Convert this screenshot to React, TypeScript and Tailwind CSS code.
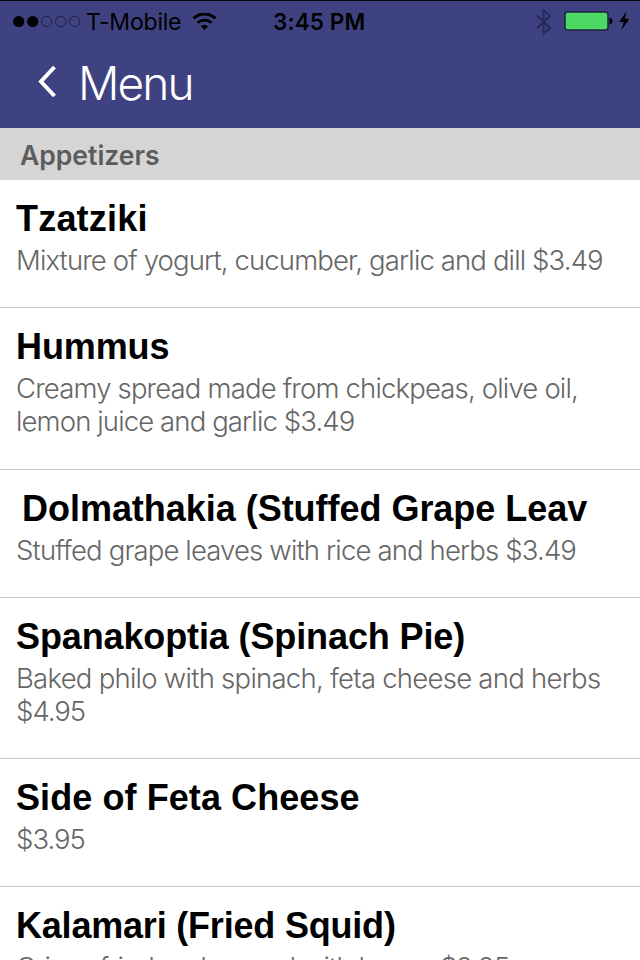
type Line = { text: string; tracking: string };
type Item = { name: string; nameClass: string; height: string; lines: Line[] };

const items: Item[] = [
  {
    name: "Tzatziki",
    nameClass: "tracking-[0.2px]",
    height: "h-[128px]",
    lines: [{ text: "Mixture of yogurt, cucumber, garlic and dill $3.49", tracking: "tracking-[-0.87px]" }],
  },
  {
    name: "Hummus",
    nameClass: "tracking-[-0.1px]",
    height: "h-[162px]",
    lines: [
      { text: "Creamy spread made from chickpeas, olive oil,", tracking: "tracking-[-0.83px]" },
      { text: "lemon juice and garlic $3.49", tracking: "tracking-[-0.88px]" },
    ],
  },
  {
    name: "Dolmathakia (Stuffed Grape Leav",
    nameClass: "pl-[6px] tracking-[-0.03px]",
    height: "h-[128px]",
    lines: [{ text: "Stuffed grape leaves with rice and herbs $3.49", tracking: "tracking-[-0.85px]" }],
  },
  {
    name: "Spanakoptia (Spinach Pie)",
    nameClass: "tracking-[-0.12px]",
    height: "h-[161px]",
    lines: [
      { text: "Baked philo with spinach, feta cheese and herbs", tracking: "tracking-[-0.74px]" },
      { text: "$4.95", tracking: "tracking-[-1px]" },
    ],
  },
  {
    name: "Side of Feta Cheese",
    nameClass: "tracking-[0.08px]",
    height: "h-[128px]",
    lines: [{ text: "$3.95", tracking: "tracking-[-1px]" }],
  },
  {
    name: "Kalamari (Fried Squid)",
    nameClass: "tracking-[-0.2px]",
    height: "h-[128px]",
    lines: [{ text: "Crispy fried and served with lemon $9.95", tracking: "tracking-[-0.88px]" }],
  },
];

function StatusBar() {
  return (
    <div className="flex h-[43px] items-center border-t border-[#0a0a12] text-black">
      <svg className="ml-[12px] shrink-0" width="70" height="14" viewBox="0 0 70 14">
        {[0, 1, 2, 3, 4].map((i) => (
          <circle
            key={i}
            cx={6.7 + i * 14}
            cy="6.5"
            r={i < 2 ? 5.6 : 5.2}
            fill={i < 2 ? "#000" : "none"}
            stroke={i < 2 ? "none" : "#1c1e45"}
            strokeWidth="1"
          />
        ))}
      </svg>
      <span className="ml-[4px] w-[96px] whitespace-nowrap font-['Inter','Liberation_Sans',sans-serif] text-[23px] leading-[28px] tracking-[-0.2px]">
        T-Mobile
      </span>
      <svg className="ml-[10px] shrink-0" width="25" height="19" viewBox="0 0 25 19" fill="none" stroke="#000">
        <path d="M1.500 5.400C7.800 -.6 17.200 -.6 23.500 5.400" strokeWidth="3" />
        <path d="M5.500 9.800C9.500 6.100 15.500 6.100 19.500 9.800" strokeWidth="2.800" />
        <path d="M8.800 13.200Q12.500 10.100 16.200 13.200L12.500 17Z" fill="#000" stroke="none" />
      </svg>
      <span className="ml-[56px] w-[95px] whitespace-nowrap font-['Inter','Liberation_Sans',sans-serif] text-[22.500px] font-semibold leading-[28px] tracking-[0.1px]">
        3:45 PM
      </span>
      <svg className="ml-[168px] shrink-0" width="16" height="28" viewBox="0 0 16 28" fill="none" stroke="#272a58" strokeWidth="2">
        <path d="M1 7.500L14 20L7.500 25.500V2.500L14 8L1 20.500" />
      </svg>
      <svg className="ml-[12px] shrink-0" width="66" height="22" viewBox="0 0 66 22">
        <rect x="1" y="1" width="43" height="18" rx="2.500" fill="#4cd964" stroke="#1d2340" strokeWidth="1.500" />
        <path d="M45.500 6.500Q48.500 7.500 48.500 10Q48.500 12.500 45.500 13.500Z" fill="#000" />
        <path d="M62.500 0.500L55 11H59.700L57.500 19L65.500 7.800H60.800Z" fill="#000" />
      </svg>
    </div>
  );
}

export default function App() {
  return (
    <div className="h-[960px] w-[640px] overflow-hidden bg-white font-['Liberation_Sans',Arial,sans-serif]">
      <header className="h-[128px] bg-[#3f4280]">
        <StatusBar />
        <div className="flex h-[80px] items-center">
          <svg className="ml-[37px] shrink-0" width="20" height="36" viewBox="0 0 20 36" fill="none" stroke="#fff" strokeWidth="4">
            <path d="M17.500 2L4 16.500L17.500 31" />
          </svg>
          <h1 className="ml-[21px] font-['Inter','Liberation_Sans',sans-serif] text-[46px] font-light leading-[56px] tracking-[-1.9px] text-white">
            Menu
          </h1>
        </div>
      </header>
      <div className="flex h-[52px] items-center bg-[#d5d5d5] pl-[20px] pt-[4px] font-['Inter','Liberation_Sans',sans-serif] text-[26.500px] font-semibold text-[#5c5c5c]">
        Appetizers
      </div>
      <ul>
        {items.map((item) => (
          <li key={item.name} className={`${item.height} border-b border-[#c8c8c8] pl-[16px] pt-[19px]`}>
            <h2 className={`${item.nameClass} whitespace-nowrap text-[36px] font-bold leading-[40px] text-black`}>
              {item.name}
            </h2>
            <div className="mt-[5px] font-['Inter','Liberation_Sans',sans-serif] text-[27.500px] font-light leading-[33px] text-[#666]">
              {item.lines.map((line) => (
                <p key={line.text} className={`${line.tracking} whitespace-nowrap`}>
                  {line.text}
                </p>
              ))}
            </div>
          </li>
        ))}
      </ul>
    </div>
  );
}
